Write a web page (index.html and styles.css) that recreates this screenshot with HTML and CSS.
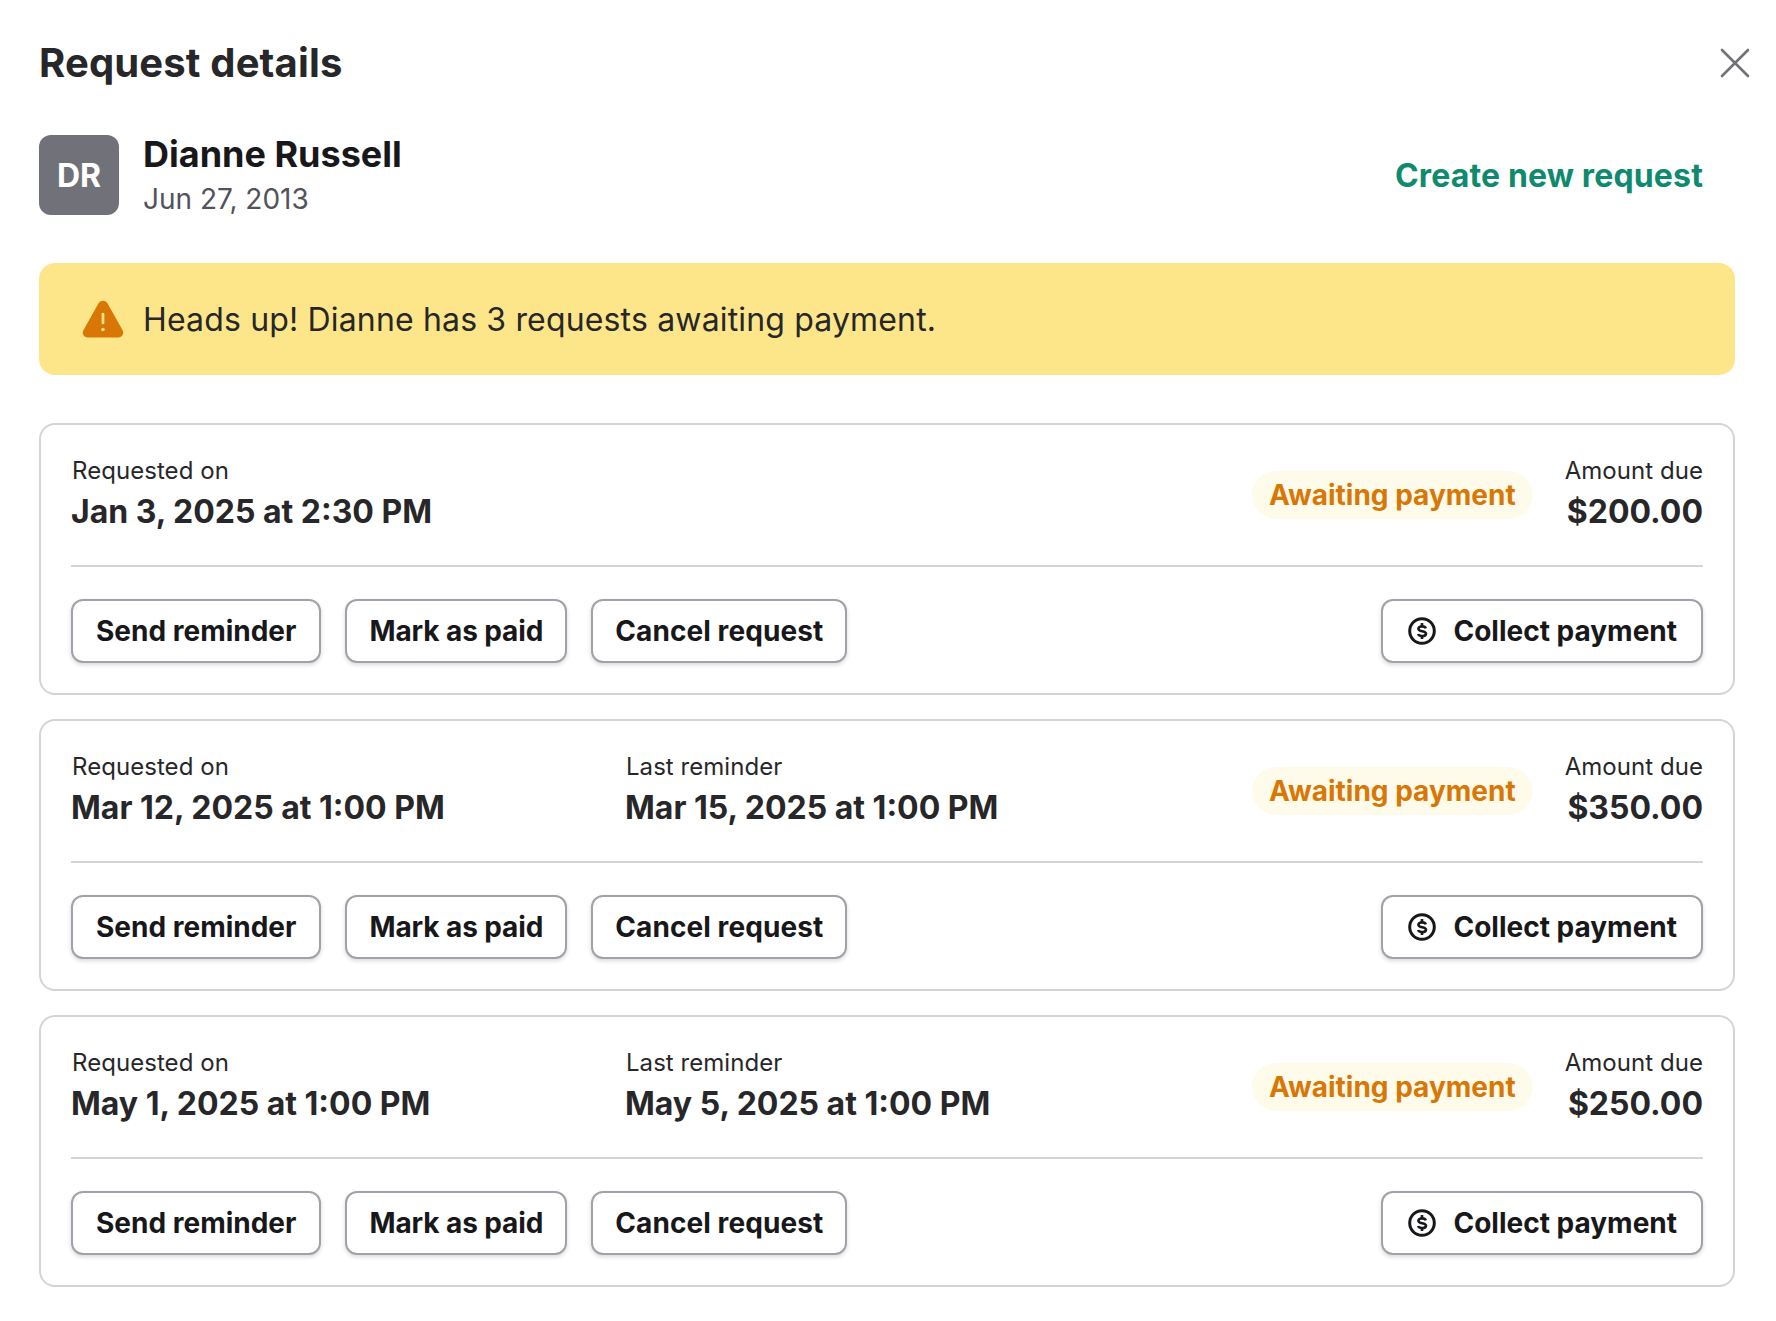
FILE: index.html
```html
<!DOCTYPE html>
<html lang="en">
<head>
<meta charset="utf-8">
<title>Request details</title>
<link rel="stylesheet" href="styles.css">
</head>
<body>
<main class="panel">
  <header class="title-row">
    <h1 class="title">Request details</h1>
    <button class="close" aria-label="Close">
      <svg width="32" height="32" viewBox="0 0 32 32" fill="none" stroke="#71717a" stroke-width="2.6" stroke-linecap="round"><path d="M3 3l26 26M29 3L3 29"/></svg>
    </button>
  </header>
  <section class="person">
    <div class="avatar">DR</div>
    <div class="person-text">
      <div class="name">Dianne Russell</div>
      <div class="date">Jun 27, 2013</div>
    </div>
    <a class="create">Create new request</a>
  </section>
  <div class="alert">
    <svg class="alert-icon" width="42" height="38" viewBox="0 0 42 38"><path fill="#d97706" d="M16.400 3.400c2-3.600 7.200-3.600 9.200 0l15 26.800c1.800 3.300-.5 7.300-4.200 7.300H5.600c-3.700 0-6-4-4.200-7.300z"/><path fill="none" stroke="#fde68a" stroke-width="2.700" stroke-linecap="round" d="M21 14v9"/><circle cx="21" cy="29.500" r="1.700" fill="#fde68a"/></svg>
    <span>Heads up! Dianne has 3 requests awaiting payment.</span>
  </div>
  <div class="cards">
    <article class="card">
      <div class="card-top">
        <div class="col"><div class="label">Requested on</div><div class="value">Jan 3, 2025 at 2:30 PM</div></div>
        <span class="badge">Awaiting payment</span>
        <div class="col amount"><div class="label">Amount due</div><div class="value">$200.00</div></div>
      </div>
      <div class="actions">
        <button class="btn btn-send">Send reminder</button>
        <button class="btn btn-mark">Mark as paid</button>
        <button class="btn btn-cancel">Cancel request</button>
        <button class="btn collect"><svg width="28" height="28" viewBox="0 0 28 28" fill="none" stroke="#18181b"><circle cx="14" cy="14" r="12.300" stroke-width="3"/><path stroke-width="2.600" d="M17.800 11.400c-.4-1.300-1.900-2-3.800-2-2.100 0-3.600.9-3.600 2.400 0 3.500 7.600 1.400 7.600 4.900 0 1.500-1.600 2.400-3.900 2.400-2 0-3.500-.7-3.900-2.100"/><path stroke-width="2.600" d="M14 6v3.400M14 18.600V22"/></svg>Collect payment</button>
      </div>
    </article>
    <article class="card">
      <div class="card-top">
        <div class="col wide"><div class="label">Requested on</div><div class="value">Mar 12, 2025 at 1:00 PM</div></div>
        <div class="col"><div class="label">Last reminder</div><div class="value">Mar 15, 2025 at 1:00 PM</div></div>
        <span class="badge">Awaiting payment</span>
        <div class="col amount"><div class="label">Amount due</div><div class="value">$350.00</div></div>
      </div>
      <div class="actions">
        <button class="btn btn-send">Send reminder</button>
        <button class="btn btn-mark">Mark as paid</button>
        <button class="btn btn-cancel">Cancel request</button>
        <button class="btn collect"><svg width="28" height="28" viewBox="0 0 28 28" fill="none" stroke="#18181b"><circle cx="14" cy="14" r="12.300" stroke-width="3"/><path stroke-width="2.600" d="M17.800 11.400c-.4-1.300-1.900-2-3.800-2-2.100 0-3.600.9-3.600 2.400 0 3.500 7.600 1.400 7.600 4.900 0 1.500-1.600 2.400-3.900 2.400-2 0-3.500-.7-3.900-2.100"/><path stroke-width="2.600" d="M14 6v3.400M14 18.600V22"/></svg>Collect payment</button>
      </div>
    </article>
    <article class="card">
      <div class="card-top">
        <div class="col wide"><div class="label">Requested on</div><div class="value">May 1, 2025 at 1:00 PM</div></div>
        <div class="col"><div class="label">Last reminder</div><div class="value">May 5, 2025 at 1:00 PM</div></div>
        <span class="badge">Awaiting payment</span>
        <div class="col amount"><div class="label">Amount due</div><div class="value">$250.00</div></div>
      </div>
      <div class="actions">
        <button class="btn btn-send">Send reminder</button>
        <button class="btn btn-mark">Mark as paid</button>
        <button class="btn btn-cancel">Cancel request</button>
        <button class="btn collect"><svg width="28" height="28" viewBox="0 0 28 28" fill="none" stroke="#18181b"><circle cx="14" cy="14" r="12.300" stroke-width="3"/><path stroke-width="2.600" d="M17.800 11.400c-.4-1.300-1.900-2-3.800-2-2.100 0-3.600.9-3.600 2.400 0 3.500 7.600 1.400 7.600 4.900 0 1.500-1.600 2.400-3.900 2.400-2 0-3.500-.7-3.900-2.100"/><path stroke-width="2.600" d="M14 6v3.400M14 18.600V22"/></svg>Collect payment</button>
      </div>
    </article>
  </div>
</main>
</body>
</html>
```
FILE: styles.css
```css
* { box-sizing: border-box; }
html, body { margin: 0; background: #fff; }
body { font-family: Inter, "Liberation Sans", sans-serif; color: #27272a; }
.panel { padding: 39px 41px 0 39px; position: relative; }
.title-row { display: flex; align-items: center; height: 48px; }
.title { margin: 0; font-size: 40px; line-height: 48px; font-weight: 700; letter-spacing: .15px; color: #27272a; }
.close { position: absolute; top: 47px; right: 25px; padding: 0; width: 32px; height: 32px; border: 0; background: none; }
.close svg { display: block; }
.person { display: flex; align-items: center; gap: 24px; margin-top: 48px; padding-right: 32px; }
.avatar { width: 80px; height: 80px; border-radius: 12px; background: #71717a; color: #fff; display: flex; align-items: center; justify-content: center; font-size: 32px; font-weight: 700; }
.person-text { flex: 1; margin: -3px 0 -7px; }
.name { font-size: 36px; line-height: 44px; font-weight: 700; color: #18181b; }
.date { font-size: 28px; line-height: 46px; color: #52525b; }
.create { font-size: 32px; font-weight: 700; letter-spacing: .15px; color: #0f8a6e; }
.alert { display: flex; align-items: center; gap: 20px; height: 112px; margin-top: 48px; padding: 0 43px; background: #fde68a; border-radius: 16px; font-size: 32px; letter-spacing: .16px; color: #27272a; }
.alert-icon { margin-right: -1px; }
.cards { display: flex; flex-direction: column; gap: 24px; margin-top: 48px; }
.card { border: 2px solid #d4d4d8; border-radius: 16px; padding: 30px; height: 272px; }
.card-top { display: flex; align-items: flex-start; height: 110px; }
.col { flex: 1; }
.col.wide { flex: 0 0 554px; }
.col.amount { flex: none; text-align: right; margin-left: 31px; }
.label { font-size: 24px; line-height: 32px; letter-spacing: .05px; padding-left: 1px; color: #27272a; }
.value { font-size: 32px; line-height: 50px; font-weight: 700; color: #27272a; }
.badge { margin-top: 16px; height: 48px; padding: 0 17px; border-radius: 24px; background: #fffbeb; color: #d97706; font-size: 28px; font-weight: 700; line-height: 48px; }
.actions { display: flex; gap: 24px; border-top: 2px solid #d4d4d8; padding-top: 32px; }
.btn { height: 64px; padding: 0 23px; border: 2px solid #a1a1aa; border-radius: 12px; background: #fff; font: 700 28px Inter, "Liberation Sans", sans-serif; color: #18181b; box-shadow: 0 2px 4px rgba(24, 24, 27, .16); display: flex; align-items: center; gap: 17px; }
.btn-send { padding: 0 23px; }
.btn-mark { padding: 0 22px; letter-spacing: -.1px; }
.btn-cancel { padding: 0 22px; letter-spacing: .08px; }
.collect { margin-left: auto; padding: 0 24px 0 25px; }
```
